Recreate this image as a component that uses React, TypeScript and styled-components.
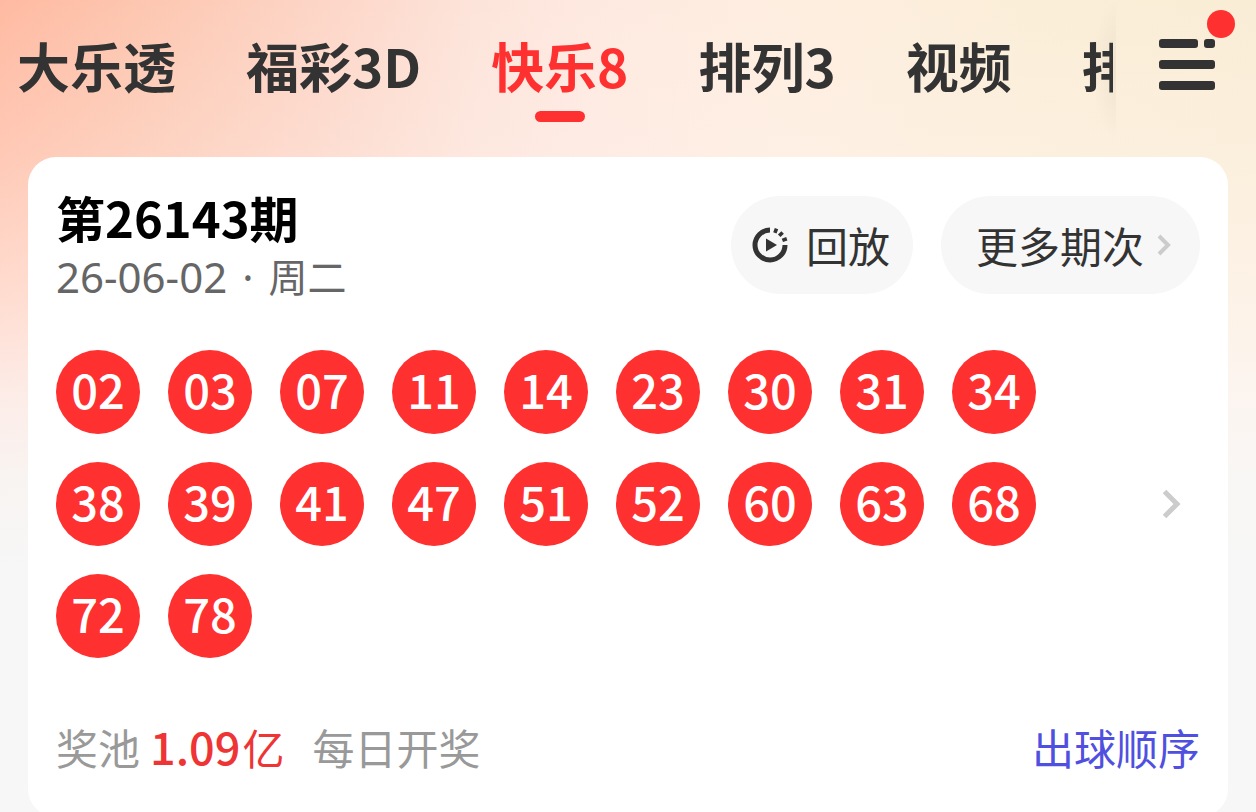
import React from "react";
import styled, { createGlobalStyle } from "styled-components";

const GlobalStyle = createGlobalStyle`
  *, *::before, *::after { box-sizing: border-box; }
  html { scrollbar-width: none; }
  body {
    margin: 0;
    background: #f7f7f7;
    font-family: "Noto Sans CJK SC", "Noto Sans", sans-serif;
    color: #333;
  }
  button {
    border: 0;
    padding: 0;
    background: none;
    font: inherit;
    color: inherit;
    cursor: pointer;
  }
`;

const Page = styled.div`
  min-height: 100vh;
  background:
    linear-gradient(
      180deg,
      rgba(255, 244, 240, 0) 0,
      rgba(255, 244, 240, 0.25) 150px,
      rgba(255, 246, 243, 0.58) 300px,
      rgba(252, 246, 245, 0.84) 400px,
      rgba(248, 247, 246, 0.95) 480px,
      #f7f7f7 570px
    ),
    linear-gradient(90deg, #ffbaa2 0%, #fdc5ae 10%, #fdd5c6 25%, #fde4da 38%, #fee9e0 47%, #feeee0 63%, #fbeed8 82%, #faedd6 100%);
`;

const Header = styled.header`
  display: flex;
  align-items: stretch;
  height: 157px;
`;

const Tabs = styled.nav`
  flex: 1;
  min-width: 0;
  display: flex;
  gap: 70px;
  padding-left: 17px;
  overflow: hidden;
`;

const Tab = styled.button<{ $active?: boolean }>`
  flex: none;
  display: flex;
  flex-direction: column;
  align-items: center;
  padding-top: 27px;
  font-size: 53px;
  line-height: 76px;
  font-weight: 700;
  white-space: nowrap;
  color: ${(p) => (p.$active ? "#ff3030" : "#333")};

  &::after {
    content: "";
    width: 50px;
    height: 11px;
    margin-top: 8px;
    border-radius: 6px;
    background: ${(p) => (p.$active ? "#ff3030" : "transparent")};
  }
`;

const MenuButton = styled.button`
  position: relative;
  flex: none;
  display: flex;
  align-items: flex-start;
  justify-content: center;
  width: 143px;
  padding: 38px 0 0 5px;

  &::before {
    content: "";
    position: absolute;
    left: -20px;
    top: 0;
    width: 23px;
    height: 140px;
    background: radial-gradient(ellipse 23px 70px at 100% 50%, rgba(90, 80, 70, 0.07), rgba(90, 80, 70, 0));
  }
`;

const Badge = styled.span`
  position: absolute;
  top: 10px;
  right: 21px;
  width: 28px;
  height: 28px;
  border-radius: 50%;
  background: #ff3030;
`;

const Card = styled.main`
  margin: 0 28px;
  padding: 30px 28px 40px;
  border-radius: 28px;
  background: #fff;
`;

const CardHead = styled.div`
  display: flex;
  justify-content: space-between;
`;

const Title = styled.h1`
  margin: 0;
  font-size: 49px;
  line-height: 60px;
  font-weight: 700;
  color: #000;
`;

const DateLine = styled.p`
  display: flex;
  gap: 15px;
  margin: 0;
  font-family: "Noto Sans", "Noto Sans CJK SC", sans-serif;
  font-size: 42px;
  line-height: 60px;
  color: #666;
`;

const Weekday = styled.span`
  font-size: 39px;
`;

const Actions = styled.div`
  display: flex;
  gap: 28px;
  padding-top: 9px;
`;

const Pill = styled.button<{ $wide?: boolean }>`
  display: flex;
  align-items: center;
  gap: ${(p) => (p.$wide ? "13px" : "18px")};
  height: 98px;
  padding: ${(p) => (p.$wide ? "0 28px 0 35px" : "0 23px 0 21px")};
  border-radius: 49px;
  background: #f7f7f7;
  font-size: 42px;
  line-height: 60px;
`;

const Draw = styled.div`
  display: flex;
  align-items: center;
  justify-content: space-between;
  margin-top: 43px;
`;

const Balls = styled.ul`
  display: grid;
  grid-template-columns: repeat(9, 84px);
  gap: 28px;
  margin: 0;
  padding: 0;
  list-style: none;
`;

const Ball = styled.li`
  display: flex;
  align-items: center;
  justify-content: center;
  height: 84px;
  padding-bottom: 6px;
  border-radius: 50%;
  background: #ff3030;
  color: #fff;
  font-size: 47px;
  line-height: 60px;
  font-weight: 500;
`;

const DetailButton = styled.button`
  display: flex;
  margin-right: 18px;
`;

const Footer = styled.footer`
  display: flex;
  align-items: baseline;
  justify-content: space-between;
  margin-top: 58px;
  font-size: 42px;
  line-height: 60px;
  color: #999;
`;

const PoolInfo = styled.div`
  display: flex;
  align-items: baseline;
  gap: 28px;
`;

const Pool = styled.div`
  display: flex;
  align-items: baseline;
  gap: 10px;
`;

const Amount = styled.strong`
  display: flex;
  align-items: baseline;
  gap: 2px;
  font-weight: 400;
  color: #ee3434;
`;

const AmountNumber = styled.span`
  font-size: 45px;
  font-weight: 500;
`;

const OrderLink = styled.a`
  color: #5050e0;
  text-decoration: none;
`;

function MenuIcon() {
  return (
    <svg width="58" height="54" viewBox="0 0 58 54" fill="#333" aria-hidden="true">
      <rect x="1" y="1" width="39" height="9" rx="3" />
      <rect x="46" y="1" width="11" height="9" rx="3" />
      <rect x="1" y="22" width="56" height="9" rx="3" />
      <rect x="1" y="43" width="56" height="9" rx="3" />
    </svg>
  );
}

function ReplayIcon() {
  return (
    <svg width="36" height="36" viewBox="0 0 36 36" fill="none" stroke="#333" aria-hidden="true">
      <path d="M18 3A15 15 0 1 0 33 18" strokeWidth="5" />
      <path d="M22.9 5.9L24.5 1.6M27.2 8.8L30.6 5.4M30.4 13.4L34.8 11.8" strokeWidth="3.6" />
      <path d="M14 11.5L25 18L14 24.5Z" fill="#333" stroke="none" />
    </svg>
  );
}

function Chevron({ width, height, stroke }: { width: number; height: number; stroke: number }) {
  const x = width - stroke;
  return (
    <svg width={width} height={height} fill="none" stroke="#ccc" strokeWidth={stroke} aria-hidden="true">
      <path d={`M${stroke / 2} ${stroke / 2}L${x} ${height / 2}L${stroke / 2} ${height - stroke / 2}`} />
    </svg>
  );
}

const tabs = ["大乐透", "福彩3D", "快乐8", "排列3", "视频", "排列5"];
const numbers = [
  "02", "03", "07", "11", "14", "23", "30", "31", "34", "38",
  "39", "41", "47", "51", "52", "60", "63", "68", "72", "78",
];

export default function App() {
  return (
    <>
      <GlobalStyle />
      <Page>
        <Header>
          <Tabs>
            {tabs.map((name) => (
              <Tab key={name} $active={name === "快乐8"}>{name}</Tab>
            ))}
          </Tabs>
          <MenuButton aria-label="菜单">
            <MenuIcon />
            <Badge />
          </MenuButton>
        </Header>
        <Card>
          <CardHead>
            <div>
              <Title>第26143期</Title>
              <DateLine>
                <span>26-06-02</span>
                <span>·</span>
                <Weekday>周二</Weekday>
              </DateLine>
            </div>
            <Actions>
              <Pill>
                <ReplayIcon />
                回放
              </Pill>
              <Pill $wide>
                更多期次
                <Chevron width={15} height={22} stroke={4} />
              </Pill>
            </Actions>
          </CardHead>
          <Draw>
            <Balls>
              {numbers.map((n) => (
                <Ball key={n}>{n}</Ball>
              ))}
            </Balls>
            <DetailButton aria-label="详情">
              <Chevron width={20} height={30} stroke={5} />
            </DetailButton>
          </Draw>
          <Footer>
            <PoolInfo>
              <Pool>
                <span>奖池</span>
                <Amount>
                  <AmountNumber>1.09</AmountNumber>
                  <span>亿</span>
                </Amount>
              </Pool>
              <span>每日开奖</span>
            </PoolInfo>
            <OrderLink href="#order">出球顺序</OrderLink>
          </Footer>
        </Card>
      </Page>
    </>
  );
}
